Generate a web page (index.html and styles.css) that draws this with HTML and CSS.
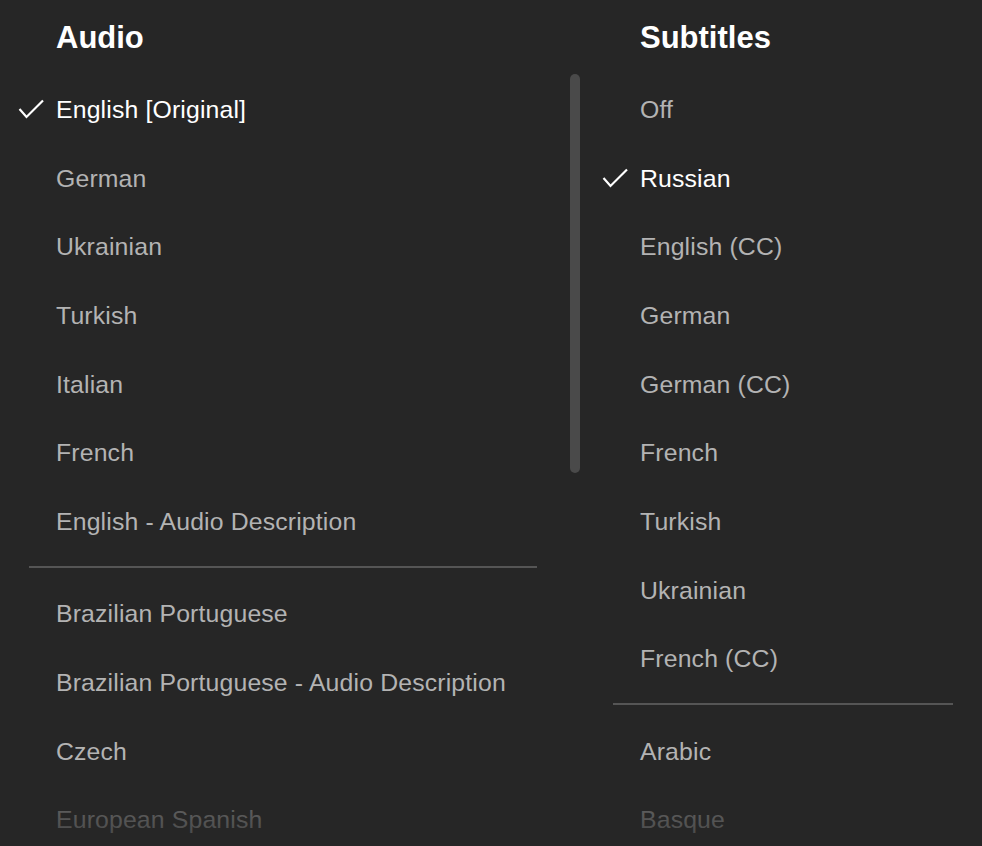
FILE: index.html
```html
<!DOCTYPE html>
<html lang="en">
<head>
<meta charset="utf-8">
<title>Audio &amp; Subtitles</title>
<link rel="stylesheet" href="styles.css">
</head>
<body>
<div class="panel">
  <section class="column column-audio">
    <h2 class="heading">Audio</h2>
    <ul class="list">
      <li class="item selected"><span class="check"><svg width="26" height="20" viewBox="0 0 26 20"><polyline points="1.5,10 8.5,18 25,1.5" fill="none" stroke="#fff" stroke-width="2.2"/></svg></span>English [Original]</li>
      <li class="item"><span class="check"></span>German</li>
      <li class="item"><span class="check"></span>Ukrainian</li>
      <li class="item"><span class="check"></span>Turkish</li>
      <li class="item"><span class="check"></span>Italian</li>
      <li class="item"><span class="check"></span>French</li>
      <li class="item"><span class="check"></span>English - Audio Description</li>
      <li class="divider"></li>
      <li class="item"><span class="check"></span>Brazilian Portuguese</li>
      <li class="item"><span class="check"></span>Brazilian Portuguese - Audio Description</li>
      <li class="item"><span class="check"></span>Czech</li>
      <li class="item"><span class="check"></span>European Spanish</li>
    </ul>
  </section>
  <div class="scroll-track"><div class="scroll-thumb"></div></div>
  <section class="column column-subs">
    <h2 class="heading">Subtitles</h2>
    <ul class="list">
      <li class="item"><span class="check"></span>Off</li>
      <li class="item selected"><span class="check"><svg width="26" height="20" viewBox="0 0 26 20"><polyline points="1.5,10 8.5,18 25,1.5" fill="none" stroke="#fff" stroke-width="2.2"/></svg></span>Russian</li>
      <li class="item"><span class="check"></span>English (CC)</li>
      <li class="item"><span class="check"></span>German</li>
      <li class="item"><span class="check"></span>German (CC)</li>
      <li class="item"><span class="check"></span>French</li>
      <li class="item"><span class="check"></span>Turkish</li>
      <li class="item"><span class="check"></span>Ukrainian</li>
      <li class="item"><span class="check"></span>French (CC)</li>
      <li class="divider"></li>
      <li class="item"><span class="check"></span>Arabic</li>
      <li class="item"><span class="check"></span>Basque</li>
    </ul>
  </section>
  <div class="fade"></div>
</div>
</body>
</html>
```
FILE: styles.css
```css
html, body {
  margin: 0;
  padding: 0;
  height: 100%;
  overflow: hidden;
  background: #262626;
}
body {
  font-family: "Liberation Sans", Arial, Helvetica, sans-serif;
  color: #b3b3b3;
}
.panel {
  display: flex;
  align-items: flex-start;
  height: 846px;
  overflow: hidden;
  position: relative;
}
.column-audio {
  width: 566px;
  flex: none;
}
.column-subs {
  flex: 1;
}
.heading {
  margin: 0;
  height: 74.67px;
  display: flex;
  align-items: center;
  padding-left: 56px;
  padding-top: 2px;
  font-size: 31px;
  font-weight: bold;
  color: #fff;
  box-sizing: border-box;
}
.list {
  list-style: none;
  margin: 0;
  padding: 0;
}
.item {
  height: 68.667px;
  display: flex;
  align-items: center;
  padding-left: 18px;
  padding-top: 2px;
  box-sizing: border-box;
  font-size: 24.8px;
  letter-spacing: 0.15px;
  white-space: nowrap;
}
.item.selected {
  color: #fff;
}
.check {
  width: 38px;
  flex: none;
  display: flex;
  align-items: center;
}
.check svg {
  display: block;
  margin-top: -2px;
}
.divider {
  height: 2px;
  background: #555;
  margin: 10.67px 29px 11px;
}
.scroll-track {
  width: 18px;
  flex: none;
  padding-left: 4px;
  padding-top: 74px;
  box-sizing: border-box;
}
.scroll-thumb {
  width: 10px;
  height: 399px;
  border-radius: 5px;
  background: #4a4a4a;
}
.fade {
  position: absolute;
  left: 0;
  right: 0;
  bottom: 0;
  height: 80px;
  background: linear-gradient(to bottom, rgba(38,38,38,0) 0%, rgba(38,38,38,0.6) 50%, rgba(38,38,38,0.8) 100%);
  pointer-events: none;
}
```
